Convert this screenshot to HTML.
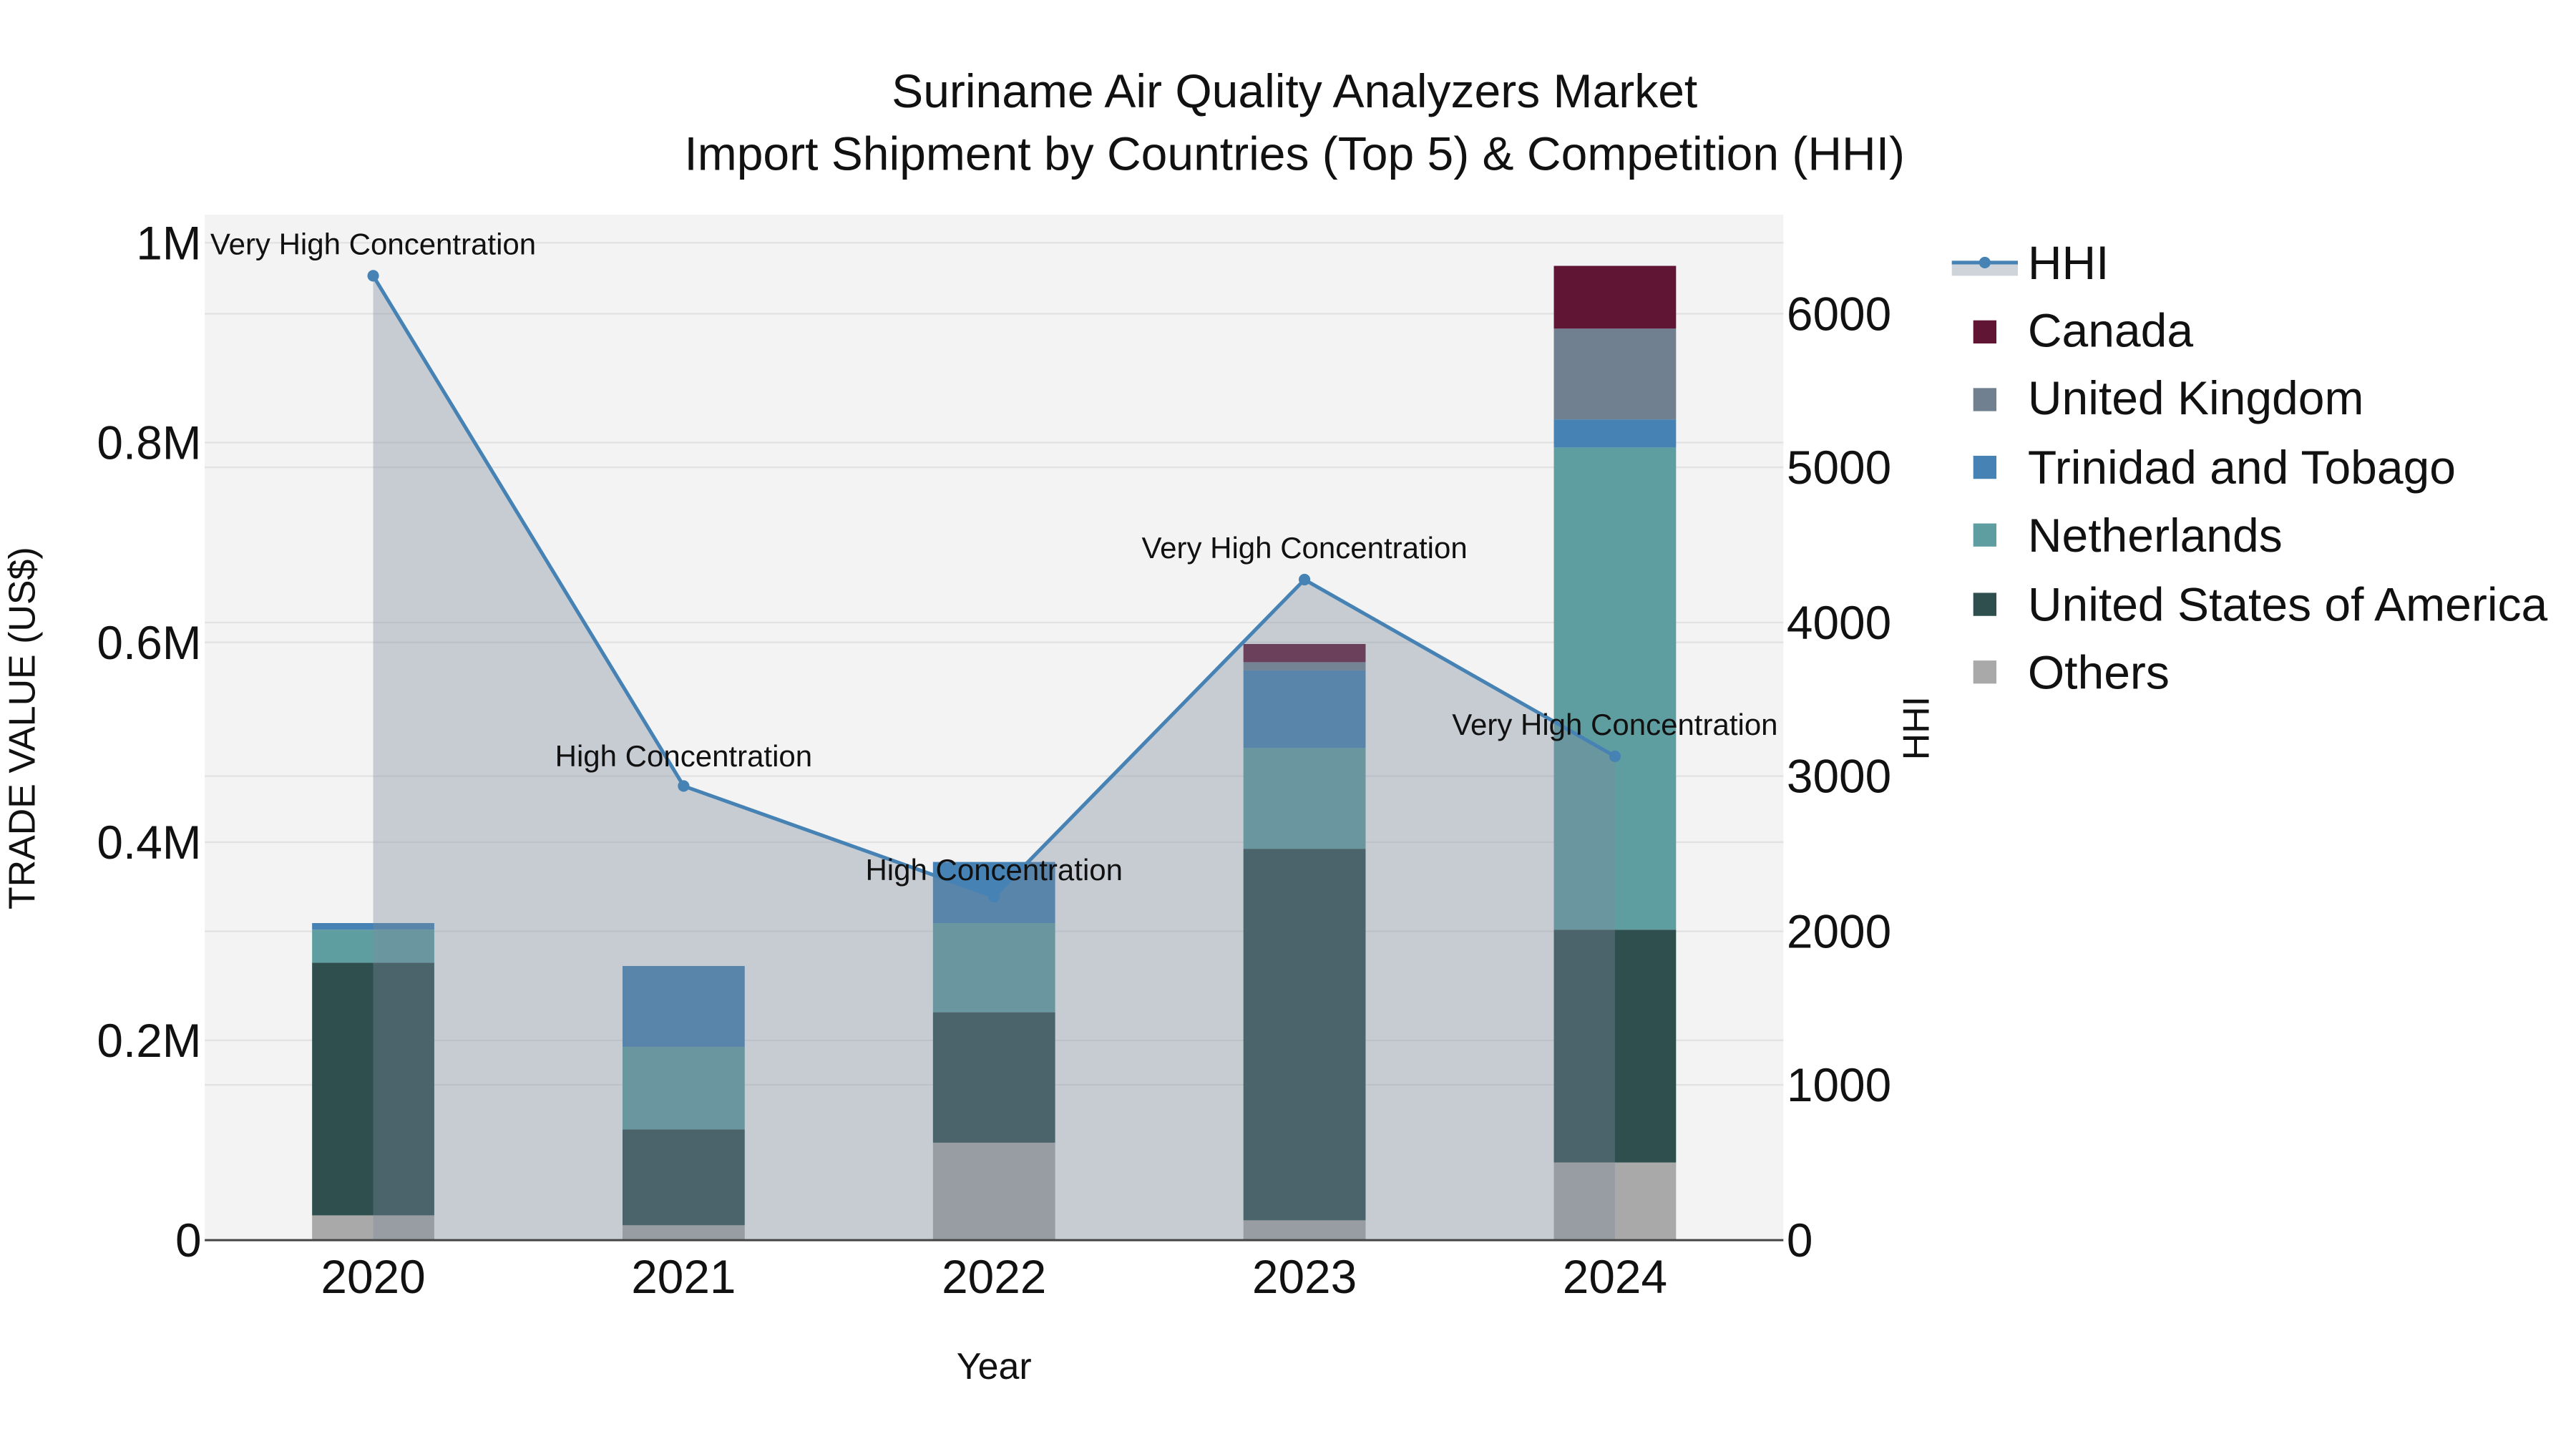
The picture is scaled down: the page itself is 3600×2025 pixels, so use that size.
<!DOCTYPE html>
<html><head><meta charset="utf-8"><style>html,body{margin:0;padding:0;background:#fff}svg{display:block}</style></head>
<body>
<svg width="3600" height="2025" viewBox="0 0 1560 877.5" xmlns="http://www.w3.org/2000/svg" font-family="Liberation Sans, sans-serif">
<rect width="1560" height="877.5" fill="#fff"/>
<rect x="124" y="130" width="956" height="621" fill="#f3f3f3"/>
<g stroke="#e2e2e2" stroke-width="1">
<line x1="124" x2="1080" y1="630" y2="630"/><line x1="124" x2="1080" y1="510" y2="510"/><line x1="124" x2="1080" y1="389" y2="389"/><line x1="124" x2="1080" y1="268" y2="268"/><line x1="124" x2="1080" y1="147" y2="147"/>
<line x1="124" x2="1080" y1="657" y2="657"/><line x1="124" x2="1080" y1="564" y2="564"/><line x1="124" x2="1080" y1="470" y2="470"/><line x1="124" x2="1080" y1="377" y2="377"/><line x1="124" x2="1080" y1="283" y2="283"/><line x1="124" x2="1080" y1="190" y2="190"/>
</g>
<g>
<rect x="189" y="736" width="74" height="15" fill="#a9a9a9"/><rect x="189" y="583" width="74" height="153" fill="#2f4f4f"/><rect x="189" y="563" width="74" height="20" fill="#5f9ea0"/><rect x="189" y="559" width="74" height="4" fill="#4682b4"/>
<rect x="377" y="742" width="74" height="9" fill="#a9a9a9"/><rect x="377" y="684" width="74" height="58" fill="#2f4f4f"/><rect x="377" y="634" width="74" height="50" fill="#5f9ea0"/><rect x="377" y="585" width="74" height="49" fill="#4682b4"/>
<rect x="565" y="692" width="74" height="59" fill="#a9a9a9"/><rect x="565" y="613" width="74" height="79" fill="#2f4f4f"/><rect x="565" y="559" width="74" height="54" fill="#5f9ea0"/><rect x="565" y="522" width="74" height="37" fill="#4682b4"/>
<rect x="753" y="739" width="74" height="12" fill="#a9a9a9"/><rect x="753" y="514" width="74" height="225" fill="#2f4f4f"/><rect x="753" y="453" width="74" height="61" fill="#5f9ea0"/><rect x="753" y="406" width="74" height="47" fill="#4682b4"/><rect x="753" y="401" width="74" height="5" fill="#708090"/><rect x="753" y="390" width="74" height="11" fill="#611535"/>
<rect x="941" y="704" width="74" height="47" fill="#a9a9a9"/><rect x="941" y="563" width="74" height="141" fill="#2f4f4f"/><rect x="941" y="271" width="74" height="292" fill="#5f9ea0"/><rect x="941" y="254" width="74" height="17" fill="#4682b4"/><rect x="941" y="199" width="74" height="55" fill="#708090"/><rect x="941" y="161" width="74" height="38" fill="#611535"/>
</g>
<polygon points="226,751 226,167 414,476 602,543 790,351 978,458 978,751" fill="rgba(125,139,158,0.37)"/>
<polyline points="226,167 414,476 602,543 790,351 978,458" fill="none" stroke="#4682b4" stroke-width="2.2"/>
<g fill="#4682b4"><circle cx="226" cy="167" r="3.5"/><circle cx="414" cy="476" r="3.5"/><circle cx="602" cy="543" r="3.5"/><circle cx="790" cy="351" r="3.5"/><circle cx="978" cy="458" r="3.5"/></g>
<g font-size="18.2" fill="#111" text-anchor="middle">
<text x="226" y="154">Very High Concentration</text>
<text x="414" y="464">High Concentration</text>
<text x="602" y="533">High Concentration</text>
<text x="790" y="338">Very High Concentration</text>
<text x="978" y="445">Very High Concentration</text>
</g>
<line x1="124" x2="1080" y1="751" y2="751" stroke="#444" stroke-width="1.3"/>
<g font-size="28.5" fill="#111" text-anchor="end">
<text x="122" y="761">0</text><text x="122" y="640">0.2M</text><text x="122" y="520">0.4M</text><text x="122" y="399">0.6M</text><text x="122" y="278">0.8M</text><text x="122" y="157">1M</text>
</g>
<g font-size="28.5" fill="#111" text-anchor="start">
<text x="1082" y="761">0</text><text x="1082" y="667">1000</text><text x="1082" y="574">2000</text><text x="1082" y="480">3000</text><text x="1082" y="387">4000</text><text x="1082" y="293">5000</text><text x="1082" y="200">6000</text>
</g>
<g font-size="28.5" fill="#111" text-anchor="middle">
<text x="226" y="783">2020</text><text x="414" y="783">2021</text><text x="602" y="783">2022</text><text x="790" y="783">2023</text><text x="978" y="783">2024</text>
</g>
<text x="602" y="835" font-size="22.5" text-anchor="middle" fill="#111">Year</text>
<text transform="translate(21,441) rotate(-90)" font-size="22.5" text-anchor="middle" fill="#111">TRADE VALUE (US$)</text>
<text transform="translate(1168,441) rotate(-90)" font-size="22.5" text-anchor="middle" fill="#111">HHI</text>
<g font-size="28.6" fill="#111" text-anchor="middle">
<text x="784" y="65">Suriname Air Quality Analyzers Market</text>
<text x="784" y="103">Import Shipment by Countries (Top 5) &amp; Competition (HHI)</text>
</g>
<rect x="1182" y="159" width="40" height="8" fill="rgba(125,139,158,0.37)"/>
<line x1="1182" x2="1222" y1="159" y2="159" stroke="#4682b4" stroke-width="2.2"/>
<circle cx="1202" cy="159" r="3.5" fill="#4682b4"/>
<g>
<rect x="1195" y="194" width="14" height="14" fill="#611535"/>
<rect x="1195" y="235" width="14" height="14" fill="#708090"/>
<rect x="1195" y="276" width="14" height="14" fill="#4682b4"/>
<rect x="1195" y="317" width="14" height="14" fill="#5f9ea0"/>
<rect x="1195" y="359" width="14" height="14" fill="#2f4f4f"/>
<rect x="1195" y="400" width="14" height="14" fill="#a9a9a9"/>
</g>
<g font-size="28.6" fill="#111">
<text x="1228" y="169">HHI</text>
<text x="1228" y="210">Canada</text>
<text x="1228" y="251">United Kingdom</text>
<text x="1228" y="293">Trinidad and Tobago</text>
<text x="1228" y="334">Netherlands</text>
<text x="1228" y="376">United States of America</text>
<text x="1228" y="417">Others</text>
</g>
</svg>
</body></html>
